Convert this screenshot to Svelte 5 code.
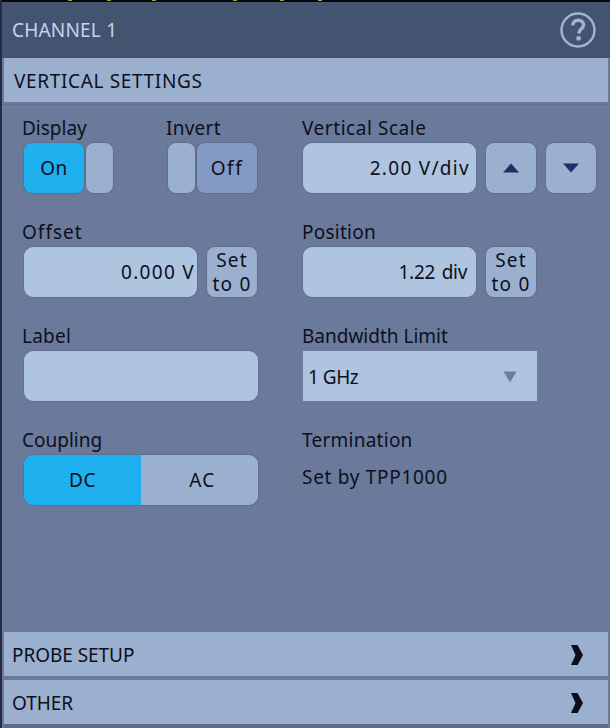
<script>
  const ticks = [68, 107, 152, 233, 280, 318];
</script>

<div class="shell">
  <div class="topline">
    {#each ticks as t}<i class="tick" style="left:{t}px"></i>{/each}
  </div>
  <header class="head">
    <span class="title">CHANNEL 1</span>
    <svg class="help" width="36" height="36" viewBox="0 0 36 36" aria-label="Help">
      <circle cx="18" cy="18" r="16.5" fill="none" stroke="#a4b3cf" stroke-width="2.4"/>
      <path d="M12.6 13.4c.3-3.2 2.6-5.2 5.6-5.2 3.2 0 5.4 1.9 5.4 4.6 0 2.2-1.2 3.3-2.7 4.5-1.3 1-1.9 1.8-1.9 3.5v.6" fill="none" stroke="#a4b3cf" stroke-width="3.4"/>
      <circle cx="18.6" cy="26.4" r="2.4" fill="#a4b3cf"/>
    </svg>
  </header>

  <div class="bar vs">VERTICAL SETTINGS</div>

  <main class="panel">
    <section class="cell">
      <div class="pair">
        <div>
          <div class="lbl tight">Display</div>
          <div class="toggle">
            <button class="btn on wide">On</button>
            <button class="btn stub"></button>
          </div>
        </div>
        <div class="invert">
          <div class="lbl">Invert</div>
          <div class="toggle">
            <button class="btn stub"></button>
            <button class="btn off wide">Off</button>
          </div>
        </div>
      </div>
    </section>
    <section class="cell">
      <div class="lbl loose">Vertical Scale</div>
      <div class="ctl">
        <div class="field scale">2.00 V/div</div>
        <button class="btn square">
          <svg width="16" height="10" viewBox="0 0 16 10"><path d="M8 0.5L16 9.5H0Z" fill="#262a6b"/></svg>
        </button>
        <button class="btn square">
          <svg width="16" height="10" viewBox="0 0 16 10"><path d="M0 0.5H16L8 9.5Z" fill="#262a6b"/></svg>
        </button>
      </div>
    </section>

    <section class="cell">
      <div class="lbl wider">Offset</div>
      <div class="ctl first">
        <div class="field val">0.000 V</div>
        <button class="btn square set">Set<br />to 0</button>
      </div>
    </section>
    <section class="cell">
      <div class="lbl">Position</div>
      <div class="ctl">
        <div class="field val pos">1.22 div</div>
        <button class="btn square set">Set<br />to 0</button>
      </div>
    </section>

    <section class="cell">
      <div class="lbl">Label</div>
      <div class="field blank"></div>
    </section>
    <section class="cell">
      <div class="lbl tight">Bandwidth Limit</div>
      <div class="select">
        <span>1 GHz</span>
        <svg width="14" height="12" viewBox="0 0 14 12"><path d="M0.5 0.5H13.5L7 11.5Z" fill="#6e7d9c"/></svg>
      </div>
    </section>

    <section class="cell">
      <div class="lbl tight">Coupling</div>
      <div class="seg">
        <span class="seg-on">DC</span>
        <span class="seg-off">AC</span>
      </div>
    </section>
    <section class="cell">
      <div class="lbl">Termination</div>
      <div class="plain">Set by TPP1000</div>
    </section>
  </main>

  <div class="bar fold first">
    <span>PROBE SETUP</span>
    <svg width="14" height="22" viewBox="0 0 14 22"><path d="M1 1H7.5L13 11L7.5 21H1L5.5 11Z" fill="#0a0d1c"/></svg>
  </div>
  <div class="bar fold last">
    <span>OTHER</span>
    <svg width="14" height="22" viewBox="0 0 14 22"><path d="M1 1H7.5L13 11L7.5 21H1L5.5 11Z" fill="#0a0d1c"/></svg>
  </div>
</div>

<style>
  :global(body) {
    margin: 0;
    background: #6b7a9b;
  }
  .shell {
    position: relative;
    width: 610px;
    height: 728px;
    box-sizing: border-box;
    border-left: 2px solid #232c42;
    display: flex;
    flex-direction: column;
    background: #6b7a9b;
    font-family: "Noto Sans", "Open Sans", sans-serif;
    font-size: 19px;
    color: #0b1020;
    overflow: hidden;
  }
  .topline {
    position: relative;
    height: 2px;
    margin-left: -2px;
    background: #05060a;
    flex: none;
  }
  .tick {
    position: absolute;
    top: 0;
    width: 4px;
    height: 1px;
    background: #9aa840;
  }
  .head {
    height: 56px;
    flex: none;
    display: flex;
    align-items: center;
    justify-content: space-between;
    padding: 0 14px 0 10px;
    background: #435370;
    color: #c6d4e8;
  }
  .title {
    letter-spacing: 0.2px;
  }
  .help {
    display: block;
  }
  .bar {
    height: 44px;
    flex: none;
    box-sizing: border-box;
    margin: 0 2px;
    padding: 2px 0 0 10px;
    background: #9bafcf;
    display: flex;
    align-items: center;
    letter-spacing: 0.2px;
  }
  .vs {
    letter-spacing: 0.65px;
  }
  .panel {
    flex: 1;
    margin: 2px 2px 0 0;
    border-top: 1px solid #62708f;
    display: grid;
    grid-template-columns: 280px 1fr;
    grid-auto-rows: 104px;
    padding: 11px 0 0 20px;
    box-sizing: border-box;
    min-height: 0;
  }
  .cell {
    min-width: 0;
  }
  .pair {
    display: flex;
  }
  .invert {
    margin-left: 53px;
  }
  .lbl {
    height: 27px;
    line-height: 24px;
    letter-spacing: 0.25px;
  }
  .tight {
    letter-spacing: 0;
  }
  .loose {
    letter-spacing: 0.55px;
  }
  .wider {
    letter-spacing: 1px;
  }
  .toggle {
    display: flex;
    gap: 2px;
    padding-left: 2px;
  }
  .btn {
    display: block;
    padding: 0;
    margin: 0;
    font: inherit;
    color: inherit;
    height: 50px;
    border: none;
    border-radius: 8px;
    box-shadow: 0 0 0 1px rgba(85, 100, 135, 0.55);
    box-sizing: border-box;
    background: #9bafcf;
    text-align: center;
    letter-spacing: 0.5px;
  }
  .wide {
    width: 60px;
  }
  .stub {
    width: 27px;
  }
  .on {
    background: #1fb0ef;
  }
  .off {
    background: #839ac6;
    letter-spacing: 1.6px;
  }
  .ctl {
    display: flex;
    gap: 10px;
    padding-left: 1px;
  }
  .ctl.first {
    padding-left: 2px;
  }
  .field {
    height: 50px;
    border-radius: 9px;
    background: #afc4de;
    box-shadow: 0 0 0 1px rgba(85, 100, 135, 0.45);
    box-sizing: border-box;
    display: flex;
    align-items: center;
    justify-content: flex-end;
    letter-spacing: 1.3px;
  }
  .scale {
    width: 173px;
    padding-right: 6px;
  }
  .val {
    width: 173px;
    padding-right: 2px;
  }
  .pos {
    padding-right: 9px;
    letter-spacing: -0.3px;
    word-spacing: 2px;
  }
  .square {
    width: 50px;
    display: flex;
    align-items: center;
    justify-content: center;
  }
  .square svg {
    display: block;
  }
  .set {
    display: block;
    line-height: 24px;
    letter-spacing: 1.2px;
    background: #9bafcf;
  }
  .blank {
    width: 234px;
    margin-left: 2px;
  }
  .select {
    width: 234px;
    height: 50px;
    margin-left: 1px;
    box-sizing: border-box;
    background: #afc4de;
    display: flex;
    align-items: center;
    justify-content: space-between;
    padding: 2px 20px 0 5px;
  }
  .select span {
    letter-spacing: -0.5px;
  }
  .seg {
    width: 234px;
    height: 50px;
    margin-left: 2px;
    box-sizing: border-box;
    display: grid;
    grid-template-columns: 117px 1fr;
    border-radius: 9px;
    overflow: hidden;
    box-shadow: 0 0 0 1px rgba(85, 100, 135, 0.55);
    text-align: center;
    line-height: 50px;
    letter-spacing: 0.5px;
  }
  .seg-on {
    background: #1fb0ef;
  }
  .seg-off {
    background: #9bafcf;
    letter-spacing: 1.4px;
    padding-left: 6px;
  }
  .plain {
    margin-top: 10px;
    line-height: 24px;
    letter-spacing: 0.7px;
  }
  .fold {
    justify-content: space-between;
    padding-left: 8px;
    padding-right: 24px;
    margin-bottom: 4px;
    letter-spacing: -0.05px;
  }
  .last {
    box-shadow: 0 4px 0 #5d6b8a;
  }
</style>
